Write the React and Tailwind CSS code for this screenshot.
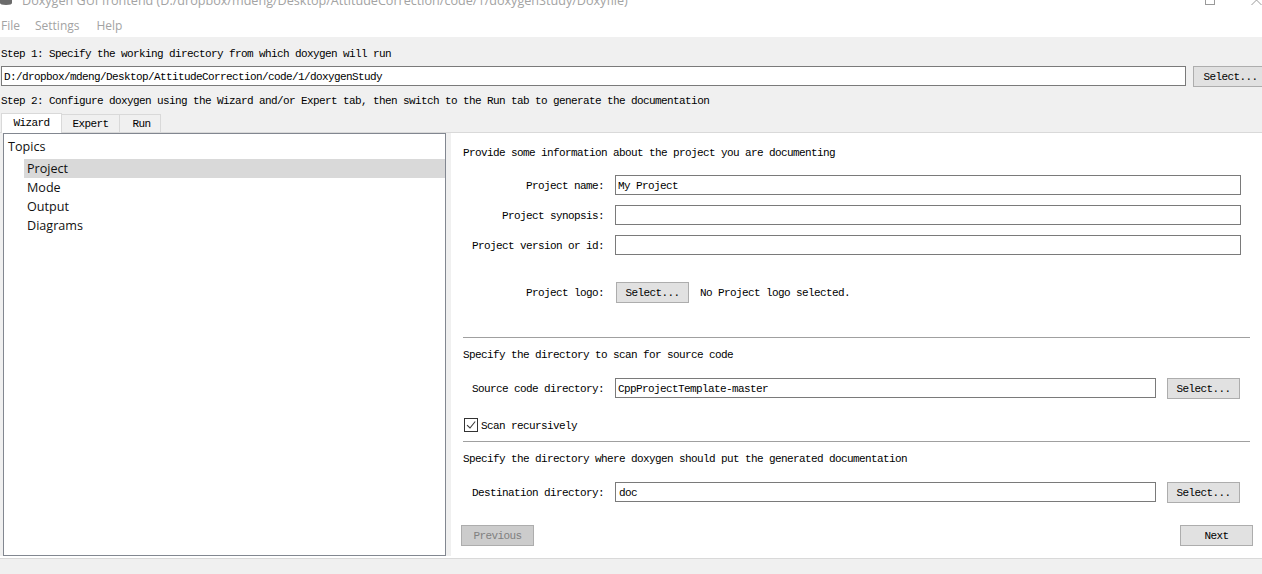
const monoBase = "font-['Liberation_Mono',monospace] text-[11px] tracking-[-0.6px] whitespace-pre";
const mono = `${monoBase} text-black`;
const ui = "font-['Open_Sans',sans-serif]";

function Btn({ children, className = "", disabled }) {
  return (
    <div className={`w-[73px] h-[21px] shrink-0 border border-[#adadad] flex items-center justify-center ${disabled ? "bg-[#cccccc]" : "bg-[#e1e1e1]"} ${className}`}>
      <span className={`${monoBase} pt-[2px] ${disabled ? "text-[#808080]" : "text-black"}`}>{children}</span>
    </div>
  );
}

function Input({ value = "", className = "" }) {
  return (
    <div className={`h-[20px] shrink-0 bg-white border border-[#7a7a7a] flex items-center pl-[2px] ${className}`}>
      <span className={`${mono} pt-[2px]`}>{value}</span>
    </div>
  );
}

function Label({ children }) {
  return <div className={`${mono} pt-[2px] w-[141px] text-right shrink-0 mr-[11px]`}>{children}</div>;
}

function Row({ label, value, className = "" }) {
  return (
    <div className={`flex items-center h-[20px] ${className}`}>
      <Label>{label}</Label>
      <Input value={value} className="w-[626px]" />
    </div>
  );
}

function DirRow({ label, value, className = "", inputClass = "" }) {
  return (
    <div className={`flex items-start h-[21px] ${className}`}>
      <div className="h-[20px] flex items-center"><Label>{label}</Label></div>
      <Input value={value} className={`w-[541px] ${inputClass}`} />
      <Btn className="ml-[11px]">Select...</Btn>
    </div>
  );
}

function Tab({ children, active, className = "" }) {
  return (
    <div className={`flex items-center justify-center border border-[#d9d9d9] ${active ? "h-[20px] bg-white border-b-0 mb-[-1px] z-10" : "h-[18px] bg-[#f0f0f0] border-l-0 border-b-0"} ${className}`}>
      <span className={`${mono} ${active ? "" : "pt-[2px]"}`}>{children}</span>
    </div>
  );
}

export default function App() {
  return (
    <div className="w-[1262px] h-[574px] overflow-hidden bg-[#f0f0f0] flex flex-col">
      {/* title + menu */}
      <div className="h-[37px] bg-white shrink-0 flex flex-col">
        <div className="h-[8px] overflow-hidden flex items-end shrink-0">
          <svg width="14" height="8" viewBox="0 0 14 8" className="shrink-0">
            <path d="M0 0h12v3c0 1-2 2-6 2s-6-1-6-2z" fill="#6b6b6b" />
          </svg>
          <div className={`ml-[8px] w-[1168px] h-[8px] ${ui} text-[12.6px] leading-[14px] text-[#a3a3a3] whitespace-pre flex items-end`}>
            <span>Doxygen GUI frontend (D:/dropbox/mdeng/Desktop/AttitudeCorrection/code/1/doxygenStudy/Doxyfile)</span>
          </div>
          <div className="ml-[33px] w-[10px] h-[5px] mb-[3px] border border-t-0 border-[#9a9a9a] shrink-0" />
          <svg width="11" height="5" viewBox="0 0 11 5" className="ml-[36px] mb-[3px] shrink-0">
            <path d="M0.5 5L5.5 0L10.5 5" stroke="#9a9a9a" fill="none" />
          </svg>
        </div>
        <div className={`flex items-center h-[20px] mt-[8px] pl-[1px] ${ui} text-[12px] leading-[18px] text-[#a3a3a3]`}>
          <span>File</span>
          <span className="ml-[15px]">Settings</span>
          <span className="ml-[17px]">Help</span>
        </div>
      </div>

      {/* step 1 */}
      <div className={`${mono} h-[29px] pl-[1px] pt-[10px] leading-[14px] shrink-0`}>Step 1: Specify the working directory from which doxygen will run</div>
      <div className="flex items-start pl-[1px] h-[21px] shrink-0">
        <Input value="D:/dropbox/mdeng/Desktop/AttitudeCorrection/code/1/doxygenStudy" className="w-[1185px]" />
        <Btn className="ml-[7px] !w-[75px]">Select...</Btn>
      </div>
      <div className={`${mono} h-[26px] pl-[1px] pt-[7px] leading-[14px] shrink-0`}>Step 2: Configure doxygen using the Wizard and/or Expert tab, then switch to the Run tab to generate the documentation</div>

      {/* tabs */}
      <div className="flex items-end pl-[1px] h-[19px] shrink-0">
        <Tab active className="w-[61px]">Wizard</Tab>
        <Tab className="w-[58px]">Expert</Tab>
        <Tab className="w-[41px] pl-[3px]">Run</Tab>
      </div>

      {/* pane */}
      <div className="flex h-[427px] shrink-0 border-t border-b border-[#d9d9d9] bg-white">
        <div className="w-[451px] h-[423px] bg-[#f0f0f0] shrink-0 pl-[3px] pr-[5px]">
          <div className={`h-[423px] bg-white border border-[#828790] ${ui} text-[12.6px] text-[#111111]`}>
            <div className="h-[25px] pl-[4px] pt-[2px] flex items-center">Topics</div>
            <div className="h-[19px] ml-[20px] pl-[3px] pt-[2px] bg-[#d9d9d9] flex items-center">Project</div>
            <div className="h-[19px] ml-[20px] pl-[3px] pt-[2px] flex items-center">Mode</div>
            <div className="h-[19px] ml-[20px] pl-[3px] pt-[2px] flex items-center">Output</div>
            <div className="h-[19px] ml-[20px] pl-[3px] pt-[2px] flex items-center">Diagrams</div>
          </div>
        </div>
        <div className="flex-1 flex flex-col bg-white pl-[12px]">
          <div className={`${mono} mt-[13px] h-[14px] leading-[14px]`}>Provide some information about the project you are documenting</div>
          <Row label="Project name:" value="My Project" className="mt-[15px]" />
          <Row label="Project synopsis:" className="mt-[10px]" />
          <Row label="Project version or id:" className="mt-[10px]" />
          <div className="flex items-center h-[21px] mt-[27px]">
            <div className={`${mono} pt-[2px] w-[141px] text-right shrink-0 mr-[12px]`}>Project logo:</div>
            <Btn>Select...</Btn>
            <span className={`${mono} pt-[2px] ml-[11px]`}>No Project logo selected.</span>
          </div>
          <div className="h-px w-[787px] bg-[#a0a0a0] mt-[34px]" />
          <div className={`${mono} mt-[10px] h-[14px] leading-[14px]`}>Specify the directory to scan for source code</div>
          <DirRow label="Source code directory:" value="CppProjectTemplate-master" className="mt-[16px]" />
          <div className="flex items-center h-[14px] mt-[19px] ml-[1px]">
            <div className="w-[14px] h-[14px] border border-[#333333] bg-white flex items-center justify-center shrink-0">
              <svg width="10" height="10" viewBox="0 0 10 10"><path d="M1 5.2L4 8L9.2 1.5" stroke="#3a3a3a" strokeWidth="1.1" fill="none" /></svg>
            </div>
            <span className={`${mono} pt-[2px] ml-[3px]`}>Scan recursively</span>
          </div>
          <div className="h-px w-[787px] bg-[#a0a0a0] mt-[9px]" />
          <div className={`${mono} mt-[10px] h-[14px] leading-[14px]`}>Specify the directory where doxygen should put the generated documentation</div>
          <DirRow label="Destination directory:" value="doc" className="mt-[16px]" inputClass="!pl-[3px]" />
          <div className="flex justify-between mt-[22px] w-[792px] -ml-[2px]">
            <Btn disabled>Previous</Btn>
            <Btn>Next</Btn>
          </div>
        </div>
      </div>
    </div>
  );
}
